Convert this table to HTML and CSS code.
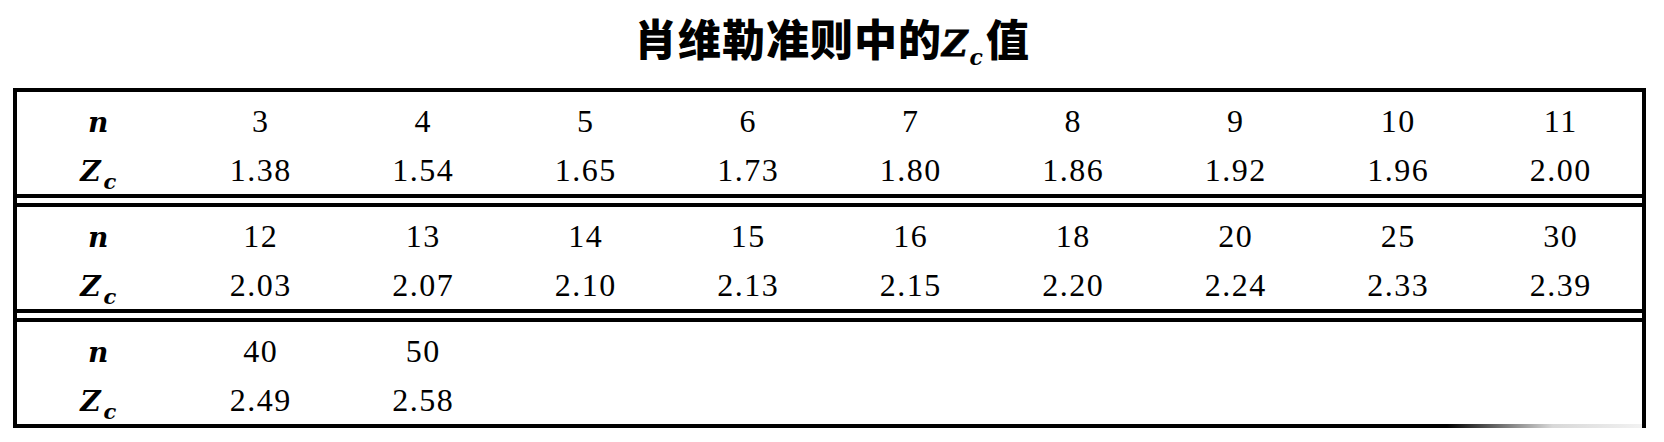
FILE: index.html
```html
<!DOCTYPE html>
<html lang="zh">
<head>
<meta charset="utf-8">
<title>肖维勒准则中的Zc值</title>
<link rel="stylesheet" href="styles.css">
</head>
<body>
<div class="page">
  <h1 class="title">肖维勒准则中的<b class="m zed">Z</b><b class="m sub">c</b>值</h1>
  <div class="table">
    <div class="block">
      <div class="cell lbl"><span class="m">n</span></div>
      <div class="cell">3</div><div class="cell">4</div><div class="cell">5</div><div class="cell">6</div><div class="cell">7</div><div class="cell">8</div><div class="cell">9</div><div class="cell">10</div><div class="cell">11</div>
      <div class="cell lbl"><span class="m">Z</span><span class="m csub">c</span></div>
      <div class="cell">1.38</div><div class="cell">1.54</div><div class="cell">1.65</div><div class="cell">1.73</div><div class="cell">1.80</div><div class="cell">1.86</div><div class="cell">1.92</div><div class="cell">1.96</div><div class="cell">2.00</div>
    </div>
    <div class="sep"></div>
    <div class="block">
      <div class="cell lbl"><span class="m">n</span></div>
      <div class="cell">12</div><div class="cell">13</div><div class="cell">14</div><div class="cell">15</div><div class="cell">16</div><div class="cell">18</div><div class="cell">20</div><div class="cell">25</div><div class="cell">30</div>
      <div class="cell lbl"><span class="m">Z</span><span class="m csub">c</span></div>
      <div class="cell">2.03</div><div class="cell">2.07</div><div class="cell">2.10</div><div class="cell">2.13</div><div class="cell">2.15</div><div class="cell">2.20</div><div class="cell">2.24</div><div class="cell">2.33</div><div class="cell">2.39</div>
    </div>
    <div class="sep"></div>
    <div class="block">
      <div class="cell lbl"><span class="m">n</span></div>
      <div class="cell">40</div><div class="cell">50</div><div class="cell"></div><div class="cell"></div><div class="cell"></div><div class="cell"></div><div class="cell"></div><div class="cell"></div><div class="cell"></div>
      <div class="cell lbl"><span class="m">Z</span><span class="m csub">c</span></div>
      <div class="cell">2.49</div><div class="cell">2.58</div><div class="cell"></div><div class="cell"></div><div class="cell"></div><div class="cell"></div><div class="cell"></div><div class="cell"></div><div class="cell"></div>
    </div>
    <div class="bottom"></div>
  </div>
</div>
</body>
</html>
```
FILE: styles.css
```css
html, body {
  margin: 0;
  padding: 0;
  background: #fff;
}
.page {
  width: 1664px;
  height: 442px;
  overflow: hidden;
  color: #000;
}
.title {
  margin: 0;
  height: 88px;
  box-sizing: border-box;
  padding-top: 6px;
  text-align: center;
  font-family: "Noto Sans CJK SC", sans-serif;
  font-weight: 900;
  font-size: 43px;
  line-height: 62px;
  letter-spacing: 1px;
}
.title .m {
  font-family: "DejaVu Serif", serif;
  font-style: italic;
  font-weight: 700;
  letter-spacing: 0;
}
.title .zed {
  font-size: 35px;
  -webkit-text-stroke: 0.8px #000;
}
.title .sub {
  font-size: 22px;
  vertical-align: -9px;
  line-height: 1;
  margin-left: 2px;
  margin-right: 3px;
}
.table {
  margin-left: 13px;
  width: 1633px;
  box-sizing: border-box;
  border-left: 4px solid #000;
  border-right: 4px solid #000;
  border-top: 4px solid #000;
}
.block {
  display: grid;
  grid-template-columns: repeat(10, 1fr);
  grid-template-rows: 49px 49px;
  height: 102px;
  box-sizing: border-box;
  padding-top: 5px;
  font-family: "Liberation Serif", serif;
  font-size: 32px;
  letter-spacing: 1.5px;
}
.cell {
  line-height: 49px;
  text-align: center;
  white-space: nowrap;
}
.lbl .m {
  font-family: "DejaVu Serif", serif;
  font-style: italic;
  font-weight: 700;
  font-size: 28px;
  letter-spacing: 0;
}
.lbl .csub {
  font-size: 21px;
  line-height: 1;
  vertical-align: -8px;
  margin-left: 3px;
}
.sep {
  height: 5px;
  border-top: 4px solid #000;
  border-bottom: 4px solid #000;
}
.bottom {
  height: 4px;
  background: linear-gradient(to right, #000 0%, #000 88%, #777 91.5%, #d8d8d8 94.5%, #f2f2f2 100%);
}
```
